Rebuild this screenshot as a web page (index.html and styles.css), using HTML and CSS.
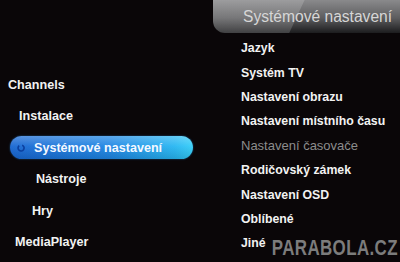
FILE: index.html
```html
<!DOCTYPE html>
<html lang="cs">
<head>
<meta charset="utf-8">
<link rel="stylesheet" href="styles.css">
</head>
<body>
<div class="screen">
  <div class="left">
    <div class="row l0">Channels</div>
    <div class="row l1">Instalace</div>
    <div class="row sel-row">
      <div class="pill">
        <svg class="pill-icon" width="8" height="8" viewBox="0 0 8 8"><path d="M5.2 1.2 A3 3 0 1 1 2.2 1.6" fill="none" stroke="#0b3f9e" stroke-width="1.6"/></svg>
        <span>Systémové nastavení</span>
      </div>
    </div>
    <div class="row l3">Nástroje</div>
    <div class="row l4">Hry</div>
    <div class="row l5">MediaPlayer</div>
  </div>
  <div class="right">
    <div class="header"><span>Systémové nastavení</span></div>
    <ul class="menu">
      <li>Jazyk</li>
      <li>Systém TV</li>
      <li>Nastavení obrazu</li>
      <li>Nastavení místního času</li>
      <li class="dim">Nastavení časovače</li>
      <li>Rodičovský zámek</li>
      <li>Nastavení OSD</li>
      <li>Oblíbené</li>
      <li>Jiné</li>
    </ul>
  </div>
  <div class="watermark">PARABOLA.CZ</div>
</div>
</body>
</html>
```
FILE: styles.css
```css
html, body {
  margin: 0;
  padding: 0;
  background: #0a0608;
}
.screen {
  position: relative;
  width: 400px;
  height: 262px;
  overflow: hidden;
  display: flex;
  font-family: "Liberation Sans", Arial, sans-serif;
  font-weight: bold;
  color: #f2f2f2;
  background: #0a0608;
  white-space: nowrap;
}
.left {
  width: 213px;
  flex: none;
  padding-top: 69px;
  display: flex;
  flex-direction: column;
  font-size: 12.6px;
}
.row {
  height: 31.5px;
  display: flex;
  align-items: center;
}
.l0 { padding-left: 8px; }
.l1 { padding-left: 19px; }
.l3 { padding-left: 36px; }
.l4 { padding-left: 32px; }
.l5 { padding-left: 15px; }
.sel-row { padding-left: 10px; }
.pill {
  width: 183px;
  height: 23px;
  border-radius: 12px;
  display: flex;
  align-items: center;
  background:
    linear-gradient(to bottom, rgba(255,255,255,0.28), rgba(255,255,255,0.05) 45%, rgba(0,0,0,0.12)),
    linear-gradient(to right, #1766d2, #1e86e4 55%, #27b6f2 90%, #34cdf8);
  box-shadow: 0 0 2px rgba(40,140,230,0.6);
  color: #f4f8ff;
}
.pill-icon {
  margin-left: 7px;
  margin-right: 9px;
}
.right {
  flex: 1;
  min-width: 0;
  display: flex;
  flex-direction: column;
}
.header {
  height: 33px;
  border-bottom-left-radius: 12px;
  display: flex;
  align-items: center;
  padding-left: 30px;
  background:
    linear-gradient(115deg, rgba(255,255,255,0.16) 0, rgba(255,255,255,0.16) 45%, rgba(255,255,255,0) 45.5%),
    linear-gradient(to bottom, #8a8a8c, #5c5c5e 55%, #1c1c1e);
  color: #d6d6d6;
  font-weight: normal;
  font-size: 15.6px;
}
.menu {
  list-style: none;
  margin: 3px 0 0;
  padding: 0 0 0 28px;
  font-size: 12.3px;
}
.menu li {
  height: 24.4px;
  display: flex;
  align-items: center;
}
.menu li.dim {
  color: #8c8c8c;
  font-weight: normal;
  font-size: 13px;
}
.watermark {
  position: absolute;
  right: 2px;
  bottom: 3px;
  font-size: 22px;
  line-height: 22px;
  font-weight: bold;
  color: #7c7c7c;
  transform: scaleX(0.77);
  transform-origin: right bottom;
  letter-spacing: 0.5px;
}
```
